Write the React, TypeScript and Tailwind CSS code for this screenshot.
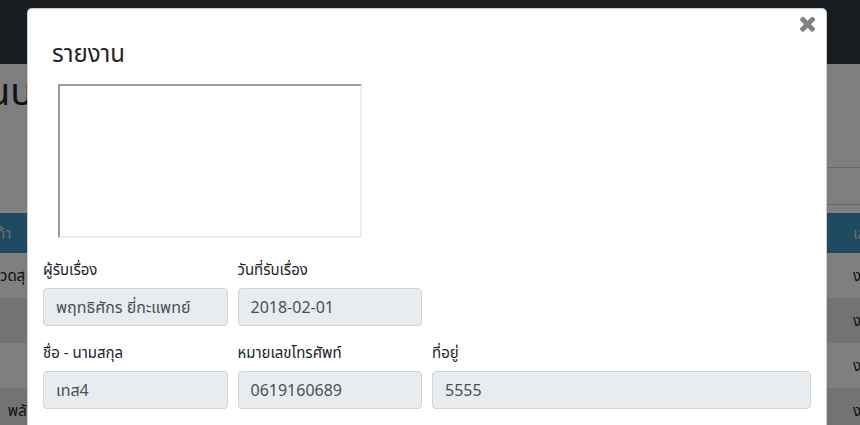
import React from "react";

const font = {
  fontFamily:
    '"Noto Sans", "Noto Sans Thai", "Leelawadee UI", Tahoma, "DejaVu Sans", sans-serif',
};

function CloseIcon() {
  return (
    <svg viewBox="100 230 1200 1330" className="h-[17px] w-[17px]" fill="currentColor">
      <path d="M1298 1322q0 40-28 68l-136 136q-28 28-68 28t-68-28l-294-294-294 294q-28 28-68 28t-68-28l-136-136q-28-28-28-68t28-68l294-294-294-294q-28-28-28-68t28-68l136-136q28-28 68-28t68 28l294 294 294-294q28-28 68-28t68 28l136 136q28 28 28 68t-28 68l-294 294 294 294q28 28 28 68z" />
    </svg>
  );
}

function Field({ label, value, className }: { label: string; value: string; className: string }) {
  return (
    <div className={`${className} px-[5px]`}>
      <label className="mb-[8px] block text-[15px] leading-[21px] text-[#212529]">{label}</label>
      <div className="flex h-[38px] items-center rounded-[4px] border border-[#ced4da] bg-[#e9ecef] px-[12px] text-[16px] text-[#495057]">
        {value}
      </div>
    </div>
  );
}

function BackgroundPage() {
  const rows = [
    { left: "วดสุ", bg: "bg-white" },
    { left: "", bg: "bg-[#e6e6e6]" },
    { left: "", bg: "bg-white" },
    { left: "  พลัง", bg: "bg-[#e6e6e6]" },
  ];
  return (
    <div className="flex h-full flex-col bg-white">
      <div className="h-[64px] shrink-0 bg-[#343a40]" />
      <div className="h-[103px] shrink-0">
        <div className="-ml-[13px] text-[38px] leading-[52px] text-[#212529]">นบ</div>
      </div>
      <div className="flex h-[46px] shrink-0 justify-end">
        <div className="-mr-[20px] h-[38px] w-[320px] border border-[#ced4da] bg-white" />
      </div>
      <div className="flex h-[40px] shrink-0 items-center justify-between bg-[#3c94c4] text-[15px] text-[#dddddd]">
        <span className="-ml-[4px]">ท้า</span>
        <span className="-mr-[6px]">เล</span>
      </div>
      {rows.map((r, i) => (
        <div
          key={i}
          className={`flex h-[45px] shrink-0 items-center justify-between text-[15px] text-[#212529] ${r.bg}`}
        >
          <span className="whitespace-pre">{r.left}</span>
          <span className="-mr-[1px]">ง</span>
        </div>
      ))}
    </div>
  );
}

export default function App() {
  return (
    <div className="relative h-[425px] w-[860px] overflow-hidden" style={font}>
      <BackgroundPage />
      <div className="absolute inset-0 bg-black/50" />
      <div className="absolute left-[27px] top-[8px] w-[800px] rounded-[5px] border border-black/20 bg-white">
        <button className="absolute right-[10px] top-[6px] text-[#808080]">
          <CloseIcon />
        </button>
        <div className="px-[15px] pb-[20px] pt-[26px]">
          <h5 className="ml-[9px] text-[24px] leading-[36px] text-[#212529]">รายงาน</h5>
          <div className="ml-[15px] mt-[13px] h-[154px] w-[304px] border-2 border-b-[#eeeeee] border-l-[#9a9a9a] border-r-[#eeeeee] border-t-[#9a9a9a]" />
          <div className="mt-[21px] -mx-[5px] flex flex-wrap">
            <Field className="w-1/4" label="ผู้รับเรื่อง" value="พฤทธิศักร ยี่กะแพทย์" />
            <Field className="w-1/4" label="วันที่รับเรื่อง" value="2018-02-01" />
            <div className="w-1/2" />
          </div>
          <div className="mt-[16px] -mx-[5px] flex flex-wrap">
            <Field className="w-1/4" label="ชื่อ - นามสกุล" value="เทส4" />
            <Field className="w-1/4" label="หมายเลขโทรศัพท์" value="0619160689" />
            <Field className="w-1/2" label="ที่อยู่" value="5555" />
          </div>
        </div>
      </div>
    </div>
  );
}
